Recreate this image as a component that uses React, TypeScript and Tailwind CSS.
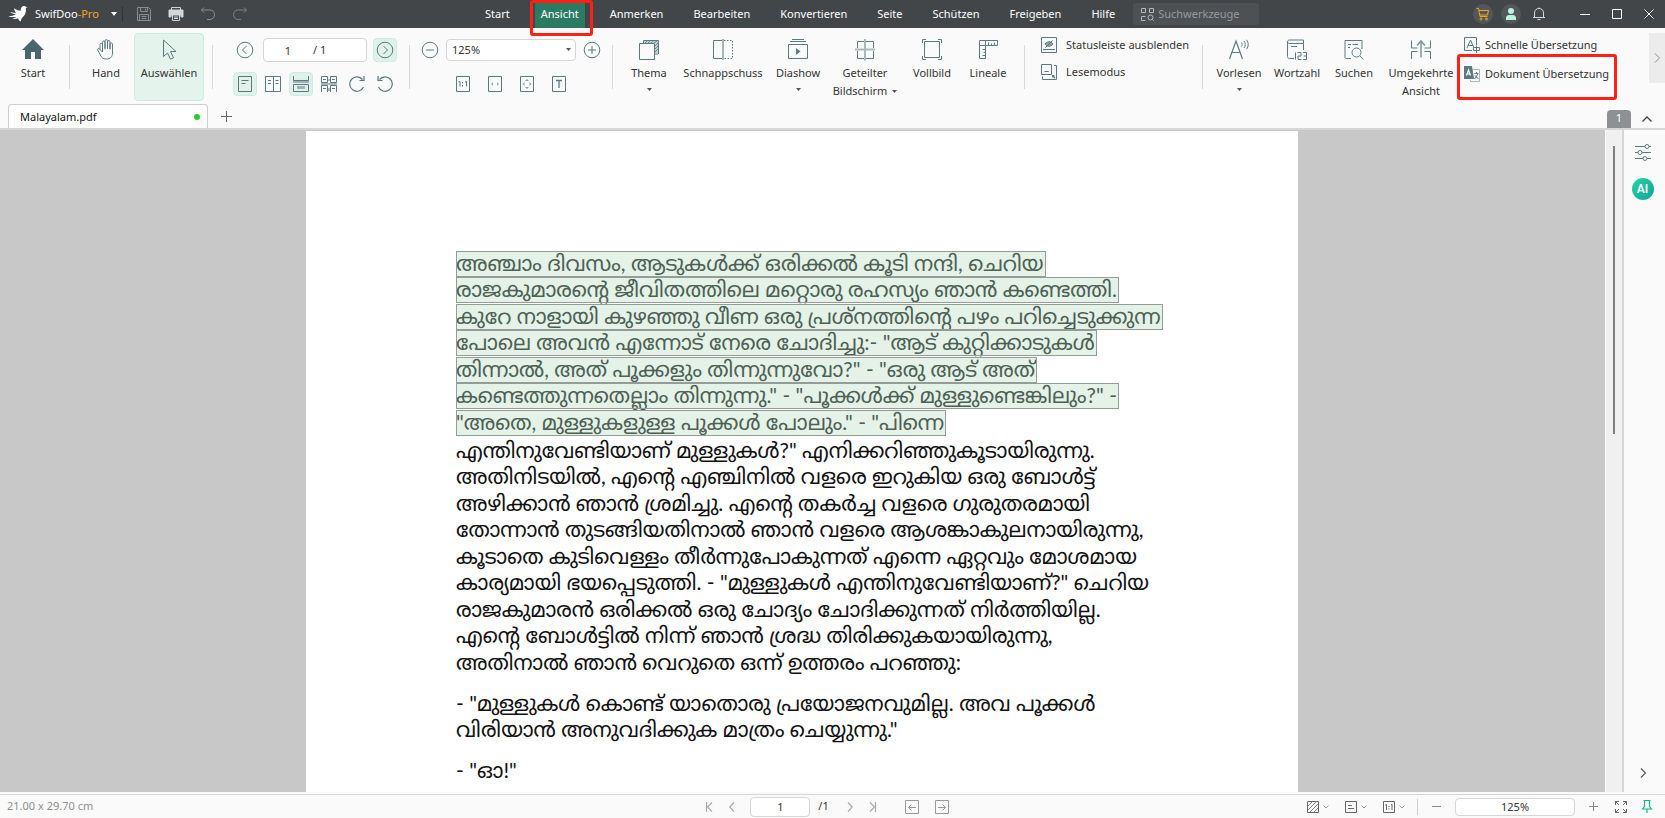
import type { ReactNode } from "react";

type IconProps = { children: ReactNode; w?: number; h?: number; className?: string };

function Icon({ children, w = 22, h = 22, className = "text-[#5b7a80]" }: IconProps) {
  return (
    <svg
      width={w}
      height={h}
      viewBox={`0 0 ${w} ${h}`}
      fill="none"
      stroke="currentColor"
      strokeWidth="1"
      aria-hidden="true"
      className={`shrink-0 ${className}`}
    >
      {children}
    </svg>
  );
}

function Separator() {
  return <div className="mt-3 h-11 w-px shrink-0 bg-[#d9d9d9]" />;
}

function Caret() {
  return (
    <svg width="5" height="3" viewBox="0 0 5 3" aria-hidden="true" className="shrink-0 text-[#555]">
      <path d="M0 0h5L2.500 3z" fill="currentColor" />
    </svg>
  );
}

/* ---------- Title bar ---------- */

const menus = ["Start", "Ansicht", "Anmerken", "Bearbeiten", "Konvertieren", "Seite", "Schützen", "Freigeben", "Hilfe"];

function TitleBar() {
  return (
    <header className="flex h-7 shrink-0 items-center bg-[#424649] text-white">
      <div className="flex w-[480px] shrink-0 items-center">
        <svg width="20" height="18" viewBox="0 0 20 18" aria-hidden="true" className="ml-2 text-white">
          <path
            fill="currentColor"
            d="M6 3.200c2.200 1.500 4.200 2.300 6.600 2.600C12.800 3.500 13 2 14.800 1.200c1.200-.5 2.300-.2 2.900.5L19.500 2l-1.700 1c.5 3.600-.3 6.500-2.200 8.300-1.500 1.400-2.600 2.600-2.800 5.200-1.600-.9-2.300-1.700-2.700-3.300-1.600.8-4.200.9-6.600.4 2-.2 3.800-.9 5-1.900-2.500.6-5.200.4-8.500-.5 3.200.1 5.900-.6 8-1.900C5.400 9.200 3.400 8.300 2 6.800c2 .8 4.200 1.100 6.200.9C7 6.400 6.200 5 6 3.200z"
          />
        </svg>
        <button type="button" className="ml-[7px] flex w-[82px] items-center justify-between whitespace-nowrap">
          <span>
            SwifDoo<span className="text-[#f5a81c]">-Pro</span>
          </span>
          <svg width="6" height="4" viewBox="0 0 6 4" aria-hidden="true">
            <path d="M0 0h6L3 4z" fill="currentColor" />
          </svg>
        </button>
        <div className="ml-[5px] h-3.5 w-px bg-[#2f3235]" />
        <button type="button" aria-label="Speichern" className="ml-[13px]">
          <Icon w={16} h={16} className="text-[#8b8e90]">
            <path d="M1.500 1.500h11l2 2v11h-13zM4.500 1.500v4h7v-4M9.500 2.500v2M3.500 14.500v-6h9v6M5.500 10.500h5M5.500 12.500h5" />
          </Icon>
        </button>
        <button type="button" aria-label="Drucken" className="ml-4">
          <Icon w={16} h={16} className="text-[#d4d5d6]">
            <path d="M3.500 4V1.500h9V4" />
            <path d="M1 4h14v7h-2V9H3v2H1z" fill="currentColor" />
            <path d="M4.500 9v5.500h7V9M6 11h4M6 12.500h4" />
          </Icon>
        </button>
        <button type="button" aria-label="Rückgängig" className="ml-4">
          <Icon w={16} h={16} className="text-[#8b8e90]">
            <path d="M4 1.500L1.500 4 4 6.500M1.500 4H10c2.800 0 4.500 1.800 4.500 4.500S12.800 13.500 10 13.500H7" />
          </Icon>
        </button>
        <button type="button" aria-label="Wiederholen" className="ml-4">
          <Icon w={16} h={16} className="text-[#7b7f81]">
            <path d="M12 1.500L14.500 4 12 6.500M14.500 4H6C3.200 4 1.500 5.800 1.500 8.500S3.200 13.500 6 13.500h3" />
          </Icon>
        </button>
      </div>

      <nav aria-label="Menü" className="flex shrink-0 items-center gap-5">
        {menus.map((m) =>
          m === "Ansicht" ? (
            <div key={m} className="relative">
              <button type="button" aria-current="page" className="block h-7 bg-[#2b7a63] px-[6px]">
                {m}
              </button>
              <div className="pointer-events-none absolute top-0 -right-2 -left-[5px] z-10 h-9 rounded-[3px] border-[3px] border-[#ff2116]" />
            </div>
          ) : (
            <button key={m} type="button" className="block h-7 px-[5px]">
              {m}
            </button>
          ),
        )}
      </nav>

      <label className="ml-[13px] flex h-[22px] w-[126px] shrink-0 items-center gap-1 rounded-[3px] bg-[#4d5154] pl-2">
        <Icon w={13} h={13} className="text-[#b4b6b8]">
          <path d="M.5.500h4v4h-4zM8.500.500h4v4h-4zM4.500 8.500h-4v4h4" />
          <circle cx="9.500" cy="9.500" r="2.500" />
          <path d="M11.300 11.300l1.500 1.500" />
        </Icon>
        <input
          type="search"
          aria-label="Suchwerkzeuge"
          placeholder="Suchwerkzeuge"
          className="w-full min-w-0 bg-transparent outline-none placeholder:text-[#97999b]"
        />
      </label>

      <div className="ml-auto flex shrink-0 items-center pr-[11px]">
        <button type="button" aria-label="Warenkorb" className="grid size-5 place-items-center rounded-full bg-[#53575a]">
          <Icon w={14} h={14} className="text-[#f0a418]">
            <path d="M.5 1.500h2l1.500 8h7.500M3 3.500h9.500l-1 4.500H4" />
            <circle cx="5" cy="12" r="1" />
            <circle cx="10.500" cy="12" r="1" />
          </Icon>
        </button>
        <button type="button" aria-label="Konto" className="ml-2 grid size-5 place-items-center rounded-full bg-[#53575a]">
          <svg width="12" height="14" viewBox="0 0 12 14" aria-hidden="true" className="text-[#b8f4e0]">
            <circle cx="6" cy="4" r="3" fill="currentColor" />
            <path d="M1 13v-2c0-2 1.500-3 3-3h4c1.500 0 3 1 3 3v2z" fill="currentColor" />
          </svg>
        </button>
        <button type="button" aria-label="Benachrichtigungen" className="ml-[11px]">
          <Icon w={14} h={14} className="text-[#d4d5d6]">
            <path d="M7 .5v1M1 10.500h12M2.500 10.500V6c0-3 2-4.500 4.500-4.500S11.500 3 11.500 6v4.500M5.500 12.500h3" />
          </Icon>
        </button>
        <button type="button" aria-label="Minimieren" className="ml-[34px]">
          <Icon w={10} h={10} className="text-white">
            <path d="M0 5.500h10" />
          </Icon>
        </button>
        <button type="button" aria-label="Maximieren" className="ml-[22px]">
          <Icon w={10} h={10} className="text-white">
            <path d="M.5.500h9v9h-9z" />
          </Icon>
        </button>
        <button type="button" aria-label="Schließen" className="ml-[22px]">
          <Icon w={10} h={10} className="text-white">
            <path d="M.5.500l9 9M9.500.500l-9 9" />
          </Icon>
        </button>
      </div>
    </header>
  );
}

/* ---------- Ribbon ---------- */

type ToolProps = {
  icon: ReactNode;
  label: string;
  second?: string;
  width: string;
  caret?: boolean;
  active?: boolean;
};

function Tool({ icon, label, second, width, caret, active }: ToolProps) {
  return (
    <button
      type="button"
      aria-pressed={active}
      className={`flex h-[68px] shrink-0 flex-col items-center rounded-sm border pt-[5px] leading-[18px] whitespace-nowrap ${width} ${
        active ? "border-[#c9ede0] bg-[#e4f4ed]" : "border-transparent"
      }`}
    >
      {icon}
      <span className="mt-[3px]">{label}</span>
      {second ? (
        <span className="flex items-center gap-[5px]">
          {second}
          {caret && <Caret />}
        </span>
      ) : (
        caret && (
          <span className="mt-[6px]">
            <Caret />
          </span>
        )
      )}
    </button>
  );
}

function SmallButton({ label, active, children }: { label: string; active?: boolean; children: ReactNode }) {
  return (
    <button
      type="button"
      aria-label={label}
      aria-pressed={active}
      className={`grid size-6 shrink-0 place-items-center rounded-sm border ${
        active ? "border-[#c9ede0] bg-[#dff1e9]" : "border-transparent"
      }`}
    >
      {children}
    </button>
  );
}

const startIcon = (
  <svg width="22" height="22" viewBox="0 0 22 22" aria-hidden="true" className="shrink-0 text-[#4a656b]">
    <path d="M11 0L22 11h-3v9h-6v-7H9v7H3v-9H0z" fill="currentColor" />
  </svg>
);
const handIcon = (
  <Icon>
    <path
      strokeLinejoin="round"
      strokeLinecap="round"
      d="M7.500 11V3.300c0-1.800 2.500-1.800 2.500 0V10M10 9V1.900c0-1.800 2.500-1.800 2.500 0V9.500M12.500 9V2.900c0-1.800 2.500-1.800 2.500 0V10M15 9.500V5.200c0-1.700 2.500-1.700 2.500 0V14c0 4-2.500 6-6 6-3.200 0-4.800-1.200-6.200-4L2.700 11c-.6-1.500 1.200-2.300 2-1L7.500 13V5.400c0-1.600-2.500-1.600-2.500 0V10"
    />
  </Icon>
);
const pointerIcon = (
  <Icon>
    <path d="M5.500 1v16.500l4-3.500 3 6.200 3-1.400-3-6.300H18z" strokeLinejoin="round" />
  </Icon>
);
const themeIcon = (
  <Icon>
    <path d="M6 2h14v12h-3V4H6z" fill="#c3cfd1" stroke="none" />
    <path d="M7 4l2-2M10 4l2-2M13 4l2-2M16 4l3-2M17 7l3-3M17 10l3-3M17 13l3-3" strokeWidth=".8" />
    <path d="M5.500 4V1.500h15V15H17" />
    <path d="M1.500 4.500h15v16h-15z" fill="#fafafa" />
  </Icon>
);
const snapIcon = (
  <Icon>
    <path d="M10 1.500H1.500v18H10" />
    <path d="M12 1.500h8.500v18H12" strokeDasharray="1.500 1.500" />
    <path d="M11 0v21" strokeWidth="2" className="text-[#a5b5b8]" stroke="currentColor" />
  </Icon>
);
const slideIcon = (
  <Icon>
    <path d="M5 .5h12M3 2.500h16M1.500 5.500h19v14h-19z" />
    <path d="M9 9v7l4.500-3.500z" fill="currentColor" stroke="none" />
  </Icon>
);
const splitIcon = (
  <Icon>
    <path d="M3.500 9V2.500H10M12 2.500h7.500V9M19.500 12v7.500H12M10 19.500H3.500V12" />
    <path d="M11 0v21.500M1 10.500h20" strokeWidth="2" className="text-[#a9b8ba]" stroke="currentColor" />
  </Icon>
);
const fullIcon = (
  <Icon>
    <path d="M3.500 2.500h15v16h-15zM1.500 4V.5H5M17 .5h3.500V4M20.500 17v3.500H17M5 20.500H1.500V17" />
  </Icon>
);
const rulerIcon = (
  <Icon>
    <path d="M2.500 1.500h18v5h-12v13h-6zM8.500 6.500h-6M8.500 1.500v5M11.500 6.500v-3M14.500 6.500v-2M17.500 6.500v-3M8.500 10.500h-3M8.500 13.500h-2M8.500 16.500h-3" />
  </Icon>
);
const readIcon = (
  <Icon>
    <path d="M1.500 20L8 2l6.500 18M4 13.500h8" strokeWidth="1.200" />
    <path d="M13.500 3.500c.8 1 .8 3 0 4M16 2c1.700 2 1.700 5 0 7M18.500 .8c2.300 2.700 2.300 6.700 0 9.400" />
  </Icon>
);
const countIcon = (
  <Icon>
    <path d="M8 19.500H3.500c-1.500 0-2-1-2-2V3c0-1.500.8-2 2-2h14v3.500H3.500c-1.200 0-2-.7-2-1.700M17.500 4.500V11M5 7.500h6" />
    <path d="M9.500 13.500v7M11.500 13.500h3.500v3.500h-3v3.500H15.500M17 13.500h3.500v7H17M17.500 17h3" />
  </Icon>
);
const searchIcon = (
  <Icon>
    <path d="M8 19.500H3.500c-1 0-1.500-.5-1.500-1.500V1.500h17V10M5 5.500h3M9.500 5.500H15M5 8.500h2" />
    <circle cx="13.500" cy="13.500" r="4.500" />
    <path d="M17 17l3.500 3.500" />
  </Icon>
);
const reverseIcon = (
  <Icon>
    <path d="M1.500 1.500v7.500H7.500M1.500 20v-7.500H7.500M20.500 1.500v7.500H14.500M20.500 20v-7.500H14.500" />
    <path d="M11 18.500V2.500M7 6.500L11 2l4 4.500" strokeWidth="1.500" className="text-[#7e969a]" stroke="currentColor" />
  </Icon>
);

function Ribbon() {
  return (
    <section aria-label="Ansicht" className="flex h-[76px] shrink-0 items-start bg-[#fafafa] pt-[5px] text-[#333]">
      <Tool icon={startIcon} label="Start" width="w-[66px]" />
      <div className="ml-[3px]">
        <Separator />
      </div>
      <div className="ml-2 flex shrink-0">
        <Tool icon={handIcon} label="Hand" width="w-14" />
        <Tool icon={pointerIcon} label="Auswählen" width="w-[70px]" active />
      </div>
      <div className="ml-2">
        <Separator />
      </div>

      <div className="ml-5 flex shrink-0 flex-col gap-[10px] pt-[5px]">
        <div className="flex items-center justify-between">
          <SmallButton label="Vorherige Seite">
            <Icon w={18} h={18}>
              <circle cx="9" cy="9" r="7.800" />
              <path d="M10.500 5l-4 4 4 4" />
            </Icon>
          </SmallButton>
          <div className="flex h-6 w-[104px] items-center rounded border border-[#d6d6d6] bg-white">
            <input
              type="text"
              aria-label="Seite"
              defaultValue="1"
              className="h-full w-12 bg-transparent text-center outline-none"
            />
            <span className="ml-px">/ 1</span>
          </div>
          <SmallButton label="Nächste Seite" active>
            <Icon w={18} h={18}>
              <circle cx="9" cy="9" r="7.800" />
              <path d="M7.500 5l4 4-4 4" />
            </Icon>
          </SmallButton>
        </div>
        <div className="flex gap-1">
          <SmallButton label="Einzelseite" active>
            <Icon w={16} h={16}>
              <path d="M1.500.500h13v15h-13zM4.500 4.500h7M4.500 7.500h4" />
            </Icon>
          </SmallButton>
          <SmallButton label="Doppelseite">
            <Icon w={16} h={16}>
              <path d="M.5.500h15v15H.5zM8.500.500v15M3 4.500h3M3 7.500h3M10.500 4.500h3M10.500 7.500h3" />
            </Icon>
          </SmallButton>
          <SmallButton label="Fortlaufend" active>
            <Icon w={16} h={16}>
              <path d="M0 4h16v3H0zM4 10h8v3H4z" fill="#9fb1b4" stroke="none" />
              <path d="M.5 0v4.500h15V0M.5 15.500v-7h15v7z" />
            </Icon>
          </SmallButton>
          <SmallButton label="Doppelseite fortlaufend">
            <Icon w={16} h={16}>
              <path d="M6 3h4v2H6zM0 7h16v2H0zM6 12h4v3H6z" fill="#a9b8ba" stroke="none" />
              <path d="M.5.500h6v6h-6zM9.500.500h6v6h-6zM.5 16V9.500h6V16M9.500 16V9.500h6V16M2 3.500h3M11 3.500h3M2 12.500h3M11 12.500h3" />
            </Icon>
          </SmallButton>
          <SmallButton label="Im Uhrzeigersinn drehen">
            <Icon w={16} h={16}>
              <path d="M14.500 11A7.200 7.200 0 1 1 13.500 3.500" strokeWidth="1.200" />
              <path d="M15 0v4.500h-4.500" strokeWidth="1.200" />
            </Icon>
          </SmallButton>
          <SmallButton label="Gegen den Uhrzeigersinn drehen">
            <Icon w={16} h={16}>
              <path d="M1.500 11A7.200 7.200 0 1 0 2.500 3.500" strokeWidth="1.200" />
              <path d="M1 0v4.500h4.500" strokeWidth="1.200" />
            </Icon>
          </SmallButton>
        </div>
      </div>
      <div className="ml-[12px]">
        <Separator />
      </div>

      <div className="ml-2 flex shrink-0 flex-col items-center gap-[10px] pt-[5px]">
        <div className="flex items-center gap-1">
          <SmallButton label="Verkleinern">
            <Icon w={18} h={18}>
              <circle cx="9" cy="9" r="7.800" />
              <path d="M5 9h8" />
            </Icon>
          </SmallButton>
          <div className="relative">
            <select
              aria-label="Zoom"
              className="block h-[22px] w-[130px] appearance-none rounded border border-[#d6d6d6] bg-white pl-[5px] outline-none"
            >
              <option>125%</option>
            </select>
            <span className="pointer-events-none absolute top-[9px] right-[5px]">
              <Caret />
            </span>
          </div>
          <SmallButton label="Vergrößern">
            <Icon w={18} h={18}>
              <circle cx="9" cy="9" r="7.800" />
              <path d="M5 9h8M9 5v8" />
            </Icon>
          </SmallButton>
        </div>
        <div className="flex gap-2">
          <SmallButton label="Originalgröße">
            <Icon w={14} h={16}>
              <path d="M.5.500h13v15H.5zM2.500 6l1.500-.5v5M9 6l1.500-.5v5M6.500 6v1.500M6.500 9v1.500" />
            </Icon>
          </SmallButton>
          <SmallButton label="Breite anpassen">
            <Icon w={14} h={16}>
              <path d="M.5.500h13v15H.5z" />
              <path d="M5 6v4L3 8zM9 6v4l2-2z" fill="#9fb1b4" stroke="none" />
            </Icon>
          </SmallButton>
          <SmallButton label="Seite anpassen">
            <Icon w={14} h={16}>
              <path d="M.5.500h13v15H.5z" />
              <path d="M4.500 6v4l-2-2zM9.500 6v4l2-2zM5 5h4l-2-2zM5 11h4l-2 2z" fill="#8fa3a7" stroke="none" />
            </Icon>
          </SmallButton>
          <SmallButton label="Text anpassen">
            <Icon w={14} h={16}>
              <path d="M.5.500h13v15H.5z" />
              <path d="M4 4.500h6M7 4.500V12" strokeWidth="1.300" />
            </Icon>
          </SmallButton>
        </div>
      </div>
      <div className="ml-2">
        <Separator />
      </div>

      <Tool icon={themeIcon} label="Thema" width="w-[72px]" caret />
      <Tool icon={snapIcon} label="Schnappschuss" width="w-[76px]" />
      <Tool icon={slideIcon} label="Diashow" width="w-[74px]" caret />
      <Tool icon={splitIcon} label="Geteilter" second="Bildschirm" width="w-[60px]" caret />
      <Tool icon={fullIcon} label="Vollbild" width="w-[74px]" />
      <Tool icon={rulerIcon} label="Lineale" width="w-[38px]" />
      <div className="ml-[17px]">
        <Separator />
      </div>

      <div className="ml-4 flex w-[147px] shrink-0 flex-col gap-[9px] pt-[3px] whitespace-nowrap">
        <button type="button" className="flex items-center gap-[9px] leading-[18px]">
          <Icon w={16} h={16}>
            <path d="M.5.500h15v15H.5zM2 12.500h12" />
            <path d="M4 7c2-3 6-3 8 0-2 3-6 3-8 0z" fill="#8fa3a7" />
            <path d="M4.500 10.500l7-7" />
          </Icon>
          Statusleiste ausblenden
        </button>
        <button type="button" className="flex items-center gap-[9px] leading-[18px]">
          <Icon w={16} h={16}>
            <path d="M.5.500h10v10H.5zM3.500 7.500h4M13 1.500h2.500v14H1.500V12.500" />
            <path d="M11 11h3l-1 1 1.500 1.500-1 1L12 13l-1 1z" fill="currentColor" stroke="none" />
          </Icon>
          Lesemodus
        </button>
      </div>
      <div className="ml-[14px]">
        <Separator />
      </div>

      <Tool icon={readIcon} label="Vorlesen" width="w-[72px]" caret />
      <Tool icon={countIcon} label="Wortzahl" width="w-11" />
      <Tool icon={searchIcon} label="Suchen" width="w-[70px]" />
      <Tool icon={reverseIcon} label="Umgekehrte" second="Ansicht" width="w-16" />

      <div className="ml-[11px] flex shrink-0 flex-col gap-[11px] pt-[3px] whitespace-nowrap">
        <button type="button" className="flex items-center gap-[5px] leading-[18px]">
          <Icon w={16} h={16}>
            <path d="M8 13.500H.5v-13h12V8M3 11l3.500-8L10 11M4 8.500h5" />
            <path d="M9.500 10.500h6v3h-6zM12.500 8.500v7.500" />
          </Icon>
          Schnelle Übersetzung
        </button>
        <div className="relative">
          <button type="button" className="flex items-center gap-[5px] leading-[18px]">
            <Icon w={16} h={16}>
              <path d="M8.500 3.500h7v12h-9V14" className="text-[#a9b8ba]" stroke="currentColor" />
              <path d="M0 0h8l2 13H0z" fill="currentColor" stroke="none" />
              <path d="M2.500 9.500L4.500 4l2 5.500M3 8h3" stroke="#fff" strokeWidth="1.200" />
              <path d="M10.500 7.500h4M12.500 6v1.500M14 8l-3.500 5M11 9.500l3.500 3.500" />
            </Icon>
            Dokument Übersetzung
          </button>
          <div className="pointer-events-none absolute -top-[11px] -right-2 -left-[7px] z-10 h-[46px] rounded-[3px] border-[3px] border-[#ff2116]" />
        </div>
      </div>

      <button type="button" aria-label="Weitere Werkzeuge" className="ml-auto grid h-[50px] w-4 shrink-0 place-items-center bg-[#ececec]">
        <Icon w={6} h={10} className="text-[#8a8a8a]">
          <path d="M1 .5L5.500 5 1 9.500" />
        </Icon>
      </button>
    </section>
  );
}

function TabBar() {
  return (
    <div className="flex h-[26px] shrink-0 items-end border-b-2 border-[#d6d6d6] bg-[#fafafa] pl-2 text-[#111]">
      <button
        type="button"
        className="flex h-6 w-[200px] items-center justify-between rounded-t border border-b-0 border-[#cfcfcf] bg-white pt-px pr-[7px] pl-[11px]"
      >
        Malayalam.pdf
        <span className="size-[6px] rounded-full bg-[#2ecc1f]" />
      </button>
      <button type="button" aria-label="Neuer Tab" className="mb-[6px] ml-3">
        <Icon w={12} h={12} className="text-[#666]">
          <path d="M6.500 1v11M1 6.500h11" />
        </Icon>
      </button>
      <div className="ml-auto flex items-center pr-[13px]">
        <span className="h-[18px] w-6 rounded-t-sm bg-[#8d9194] text-center leading-4 text-white">1</span>
        <button type="button" aria-label="Menüband einklappen" className="ml-[11px]">
          <Icon w={10} h={6} className="text-[#444]">
            <path d="M.5 5.500L5 1l4.500 4.500" strokeWidth="1.300" />
          </Icon>
        </button>
      </div>
    </div>
  );
}

/* ---------- Document ---------- */

const selectedLines = [
  "അഞ്ചാം ദിവസം, ആടുകൾക്ക് ഒരിക്കൽ കൂടി നന്ദി, ചെറിയ",
  "രാജകുമാരന്റെ ജീവിതത്തിലെ മറ്റൊരു രഹസ്യം ഞാൻ കണ്ടെത്തി.",
  "കുറേ നാളായി കുഴഞ്ഞു വീണ ഒരു പ്രശ്നത്തിന്റെ പഴം പറിച്ചെടുക്കുന്ന",
  'പോലെ അവൻ എന്നോട് നേരെ ചോദിച്ചു:- "ആട് കുറ്റിക്കാടുകൾ',
  'തിന്നാൽ, അത് പൂക്കളും തിന്നുന്നുവോ?" - "ഒരു ആട് അത്',
  'കണ്ടെത്തുന്നതെല്ലാം തിന്നുന്നു." - "പൂക്കൾക്ക് മുള്ളുണ്ടെങ്കിലും?" -',
  '"അതെ, മുള്ളുകളുള്ള പൂക്കൾ പോലും." - "പിന്നെ',
];

const plainLines = [
  'എന്തിനുവേണ്ടിയാണ് മുള്ളുകൾ?" എനിക്കറിഞ്ഞുകൂടായിരുന്നു.',
  "അതിനിടയിൽ, എന്റെ എഞ്ചിനിൽ വളരെ ഇറുകിയ ഒരു ബോൾട്ട്",
  "അഴിക്കാൻ ഞാൻ ശ്രമിച്ചു. എന്റെ തകർച്ച വളരെ ഗുരുതരമായി",
  "തോന്നാൻ തുടങ്ങിയതിനാൽ ഞാൻ വളരെ ആശങ്കാകുലനായിരുന്നു,",
  "കൂടാതെ കുടിവെള്ളം തീർന്നുപോകുന്നത് എന്നെ ഏറ്റവും മോശമായ",
  'കാര്യമായി ഭയപ്പെടുത്തി. - "മുള്ളുകൾ എന്തിനുവേണ്ടിയാണ്?" ചെറിയ',
  "രാജകുമാരൻ ഒരിക്കൽ ഒരു ചോദ്യം ചോദിക്കുന്നത് നിർത്തിയില്ല.",
  "എന്റെ ബോൾട്ടിൽ നിന്ന് ഞാൻ ശ്രദ്ധ തിരിക്കുകയായിരുന്നു,",
  "അതിനാൽ ഞാൻ വെറുതെ ഒന്ന് ഉത്തരം പറഞ്ഞു:",
];

const replyLines = [
  '- "മുള്ളുകൾ കൊണ്ട് യാതൊരു പ്രയോജനവുമില്ല. അവ പൂക്കൾ',
  'വിരിയാൻ അനുവദിക്കുക മാത്രം ചെയ്യുന്നു."',
];

function Line({ children, selected }: { children: ReactNode; selected?: boolean }) {
  return (
    <span className="block h-[26px] whitespace-nowrap even:mb-px">
      {selected ? (
        <mark className="inline-block h-[26px] bg-[#e4f2e8] pr-0.5 text-[#4d6053] outline outline-1 -outline-offset-1 outline-[#939c96]">
          {children}
        </mark>
      ) : (
        children
      )}
    </span>
  );
}

function DocumentView() {
  return (
    <div className="min-w-0 flex-1 overflow-hidden bg-[#c8c8c8] pt-px pr-px">
      <article
        lang="ml"
        className="mx-auto h-full w-[992px] bg-white pt-[120px] pl-[150px] font-['Lato','Noto_Sans_Malayalam','Noto_Sans',sans-serif] text-[21px] leading-[24px] text-[#111]"
      >
        <p>
          {selectedLines.map((l) => (
            <Line key={l} selected>
              {l}
            </Line>
          ))}
        </p>
        <p className="mt-0.5">
          {plainLines.map((l) => (
            <Line key={l}>{l}</Line>
          ))}
        </p>
        <p className="mt-[15px]">
          {replyLines.map((l) => (
            <Line key={l}>{l}</Line>
          ))}
        </p>
        <p className="mt-[15px]">
          <Line>- "ഓ!"</Line>
        </p>
      </article>
    </div>
  );
}

function SidePanel() {
  return (
    <aside className="flex w-[43px] shrink-0 flex-col items-center border-l-2 border-[#d6d6d6] bg-[#fafafa] pt-[14px] pr-1 pb-[14px]">
      <button type="button" aria-label="Eigenschaften">
        <Icon w={18} h={17}>
          <path d="M1 2.500h10M15 2.500h2M1 8.500h3M8 8.500h9M1 14.500h8M13 14.500h4" />
          <circle cx="13" cy="2.500" r="2" />
          <circle cx="6" cy="8.500" r="2" />
          <circle cx="11" cy="14.500" r="2" />
        </Icon>
      </button>
      <button
        type="button"
        className="mt-[17px] grid size-[22px] place-items-center rounded-full bg-linear-to-br from-[#27d6a0] to-[#08a597] font-['Roboto','Noto_Sans',sans-serif] text-xs font-semibold text-white"
      >
        AI
      </button>
      <button type="button" aria-label="Seitenleiste ausblenden" className="mt-auto">
        <Icon w={6} h={10} className="text-[#555]">
          <path d="M1 .5L5.500 5 1 9.500" strokeWidth="1.200" />
        </Icon>
      </button>
    </aside>
  );
}

/* ---------- Status bar ---------- */

function Chevron() {
  return (
    <Icon w={6} h={4} className="text-[#999]">
      <path d="M.5.500L3 3 5.500.500" />
    </Icon>
  );
}

function StatusBar() {
  return (
    <footer className="flex h-6 shrink-0 items-center border-t border-[#d6d6d6] bg-[#fafafa] text-[#333]">
      <div className="flex-1 pl-[7px] text-[#8f8f8f]">21.00 x 29.70 cm</div>
      <div className="flex shrink-0 items-center pr-[10px]">
        <button type="button" aria-label="Erste Seite" className="ml-1">
          <Icon w={8} h={10} className="text-[#aaa]">
            <path d="M1.500 0v10M7 .5L2.500 5 7 9.500" strokeWidth="1.200" />
          </Icon>
        </button>
        <button type="button" aria-label="Vorherige Seite" className="ml-4">
          <Icon w={6} h={10} className="text-[#aaa]">
            <path d="M5 .5L.8 5 5 9.500" strokeWidth="1.200" />
          </Icon>
        </button>
        <input
          type="text"
          aria-label="Aktuelle Seite"
          defaultValue="1"
          className="ml-[15px] h-5 w-[60px] rounded border border-[#d6d6d6] bg-white text-center outline-none"
        />
        <span className="ml-2">/1</span>
        <button type="button" aria-label="Nächste Seite" className="ml-[18px]">
          <Icon w={6} h={10} className="text-[#aaa]">
            <path d="M1 .5L5.200 5 1 9.500" strokeWidth="1.200" />
          </Icon>
        </button>
        <button type="button" aria-label="Letzte Seite" className="ml-4">
          <Icon w={8} h={10} className="text-[#aaa]">
            <path d="M6.500 0v10M1 .5L5.500 5 1 9.500" strokeWidth="1.200" />
          </Icon>
        </button>
        <button type="button" aria-label="Vorherige Ansicht" className="ml-7">
          <Icon w={14} h={14} className="text-[#999]">
            <path d="M.5.500h13v13H.5zM3.500 7.500H11M6.500 4.500l-3 3 3 3" />
          </Icon>
        </button>
        <button type="button" aria-label="Nächste Ansicht" className="ml-4">
          <Icon w={14} h={14} className="text-[#999]">
            <path d="M.5.500h13v13H.5zM3 7.500h7.500M7.500 4.500l3 3-3 3" />
          </Icon>
        </button>
      </div>
      <div className="flex flex-1 items-center justify-end pr-3">
        <button type="button" aria-label="Hintergrund" className="flex items-center gap-1">
          <Icon w={12} h={12} className="text-[#666]">
            <path d="M.5.500h11v11H.5z" />
            <path d="M1 5l4-4M1 9l8-8M2.500 11.500l9-9M6.500 11.500l5-5" strokeWidth=".8" />
          </Icon>
          <Chevron />
        </button>
        <button type="button" aria-label="Seitenlayout" className="ml-4 flex items-center gap-1">
          <Icon w={12} h={12} className="text-[#666]">
            <path d="M.5.500h11v11H.5zM3 4.500h4M3 7.500h6" />
          </Icon>
          <Chevron />
        </button>
        <button type="button" aria-label="Seitengröße" className="ml-4 flex items-center gap-1">
          <Icon w={12} h={12} className="text-[#666]">
            <path d="M.5.500h11v11H.5zM2.500 4l1-.5V9M8 4l1-.5V9M6 5v1M6 7.500v1" />
          </Icon>
          <Chevron />
        </button>
        <div className="ml-3 h-4 w-px bg-[#cfcfcf]" />
        <button type="button" aria-label="Verkleinern" className="ml-[14px]">
          <Icon w={9} h={9} className="text-[#888]">
            <path d="M0 4.500h9" />
          </Icon>
        </button>
        <input
          type="text"
          aria-label="Zoomstufe"
          defaultValue="125%"
          className="ml-[14px] h-[18px] w-[120px] rounded border border-[#d6d6d6] bg-white text-center outline-none"
        />
        <button type="button" aria-label="Vergrößern" className="ml-[14px]">
          <Icon w={9} h={9} className="text-[#888]">
            <path d="M0 4.500h9M4.500 0v9" />
          </Icon>
        </button>
        <button type="button" aria-label="Vollbild" className="ml-[17px]">
          <Icon w={12} h={12} className="text-[#666]">
            <path d="M.5 4V.5H4M.5.500l3.500 3.500M8 .5h3.500V4M11.500.500L8 4M11.500 8v3.500H8M11.500 11.500L8 8M4 11.500H.5V8M.5 11.500L4 8" />
          </Icon>
        </button>
        <button type="button" aria-label="Anheften" className="ml-[14px]">
          <Icon w={12} h={13} className="text-[#12b886]">
            <path d="M3.500.500h5v6l2 2.500h-9l2-2.500zM6 9v4M2.500.500h7" strokeWidth="1.200" />
          </Icon>
        </button>
      </div>
    </footer>
  );
}

export default function App() {
  return (
    <div className="flex h-screen flex-col overflow-hidden bg-[#fafafa] font-['Noto_Sans','Open_Sans',sans-serif] text-[11px]">
      <TitleBar />
      <Ribbon />
      <TabBar />
      <main className="flex min-h-0 flex-1 pb-0.5">
        <DocumentView />
        <div className="w-[17px] shrink-0 border-l border-white bg-[#f0f0f0] pt-4 pl-[7px]">
          <div className="h-72 w-0.5 bg-[#808080]" />
        </div>
        <SidePanel />
      </main>
      <StatusBar />
    </div>
  );
}
